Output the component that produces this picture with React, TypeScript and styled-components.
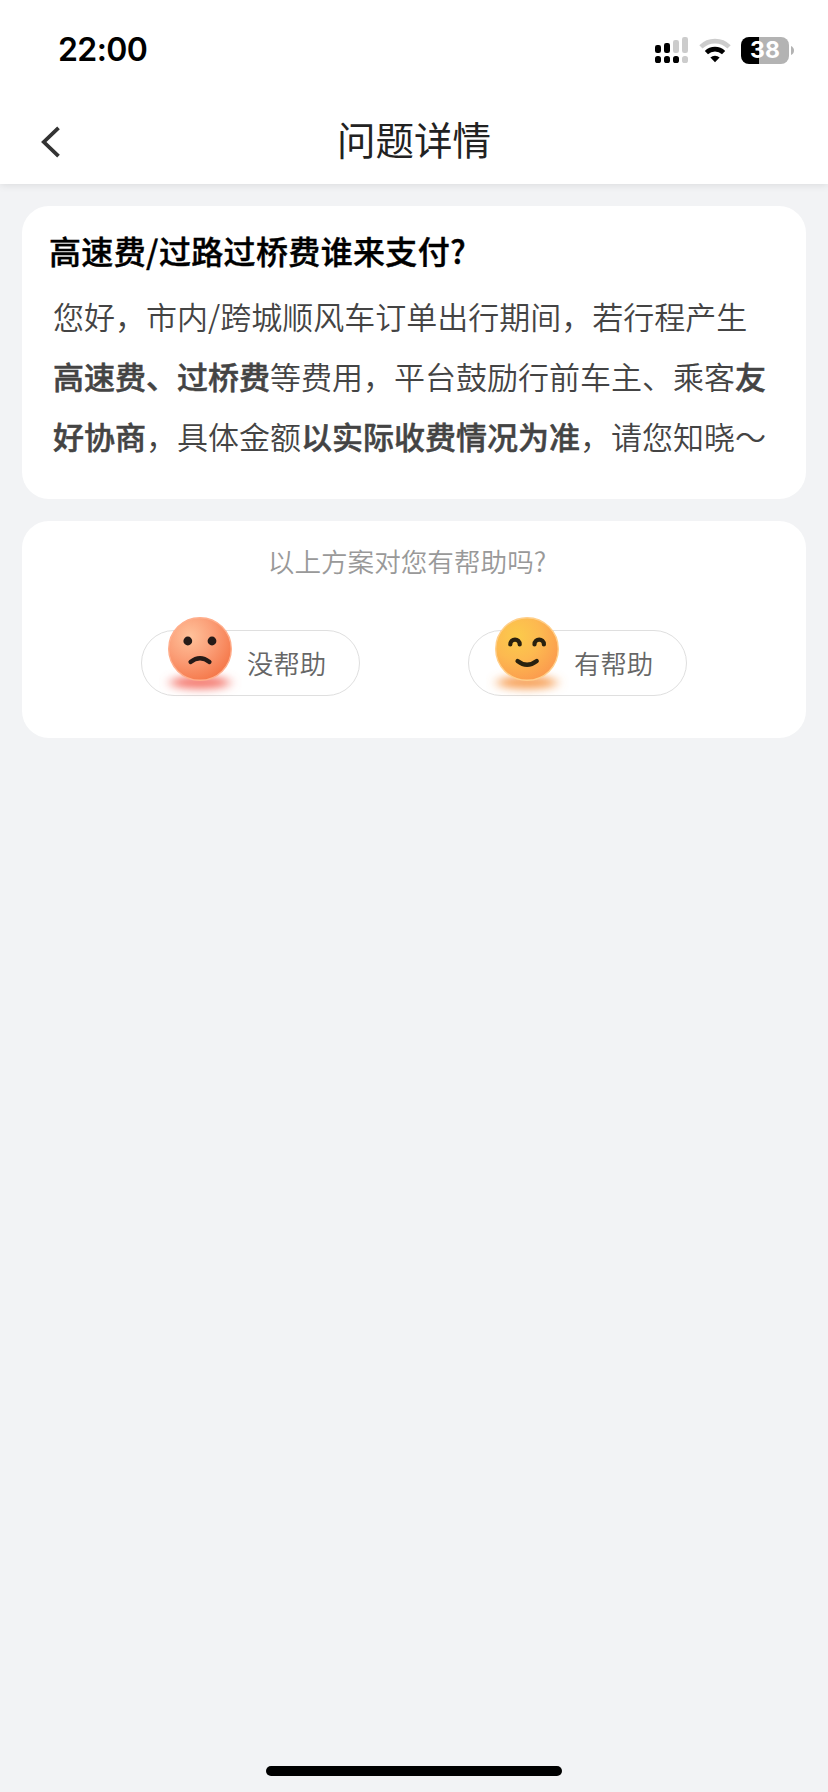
import React from "react";
import styled, { createGlobalStyle } from "styled-components";

const GlobalStyle = createGlobalStyle`
  * { box-sizing: border-box; }
  body {
    margin: 0;
    background: #f2f3f5;
    font-family: "Noto Sans CJK SC", sans-serif;
  }
`;

const Screen = styled.div`
  display: flex;
  flex-direction: column;
  width: 828px;
  height: 1792px;
  background: #f2f3f5;
`;

const Header = styled.header`
  height: 184px;
  background: #fff;
  box-shadow: 0 1px 8px rgba(0, 0, 0, 0.1);
`;

const StatusBar = styled.div`
  display: flex;
  align-items: center;
  justify-content: space-between;
  height: 100px;
  padding: 0 34px 0 58px;
`;

const Time = styled.span`
  font: 600 32px/40px Inter, sans-serif;
  letter-spacing: -0.6px;
`;

const StatusIcons = styled.div`
  display: flex;
  align-items: center;
  gap: 10px;
`;

const Battery = styled.div`
  display: flex;
  align-items: center;
  gap: 2px;
`;

const BatteryBody = styled.div<{ $level: number }>`
  width: 48px;
  height: 27px;
  border-radius: 8px;
  background: linear-gradient(to right, #000 ${(p) => p.$level}%, #b3b3b3 ${(p) => p.$level}%);
  color: #fff;
  text-align: center;
  font: 700 23px/27px Inter, sans-serif;
`;

const NavBar = styled.nav`
  display: grid;
  grid-template-columns: 100px 1fr 100px;
  align-items: center;
  height: 84px;
`;

const BackButton = styled.button`
  display: flex;
  padding: 0 0 0 40px;
  border: 0;
  background: none;
`;

const PageTitle = styled.h1`
  margin: 0;
  padding-bottom: 8px;
  color: #222;
  text-align: center;
  font-size: 38.5px;
  font-weight: 400;
  line-height: 72px;
`;

const Content = styled.main`
  display: flex;
  flex: 1;
  flex-direction: column;
  gap: 22px;
  padding: 22px 22px 0;
`;

const Card = styled.section<{ $height: number }>`
  height: ${(p) => p.$height}px;
  border-radius: 27px;
  background: #fff;
`;

const Question = styled.h2`
  margin: 0;
  padding: 20px 27px 2px;
  color: #000;
  font-size: 32px;
  font-weight: 500;
  line-height: 48px;
  letter-spacing: 0.35px;
  -webkit-text-stroke: 0.4px #000;
`;

const Answer = styled.p`
  margin: 0;
  padding: 10px 31px 0;
  color: #444;
  font-size: 31px;
  font-weight: 350;
  line-height: 60px;
  white-space: nowrap;
`;

const Strong = styled.strong`
  font-weight: 500;
  -webkit-text-stroke: 0.5px #444;
`;

const Prompt = styled.p`
  margin: 0;
  padding: 20px 14px 0 0;
  color: #999;
  text-align: center;
  font-size: 26.6px;
  font-weight: 350;
  line-height: 40px;
`;

const Choices = styled.div`
  display: flex;
  justify-content: center;
  gap: 108px;
  padding-top: 49px;
`;

const Choice = styled.button`
  position: relative;
  width: 219px;
  height: 66px;
  padding: 0 0 0 105px;
  border: 1px solid #dfdfdf;
  border-radius: 33px;
  background: #fff;
  color: #666;
  text-align: left;
  font: 350 26.4px/64px "Noto Sans CJK SC", sans-serif;
`;

const Face = styled.svg`
  position: absolute;
  left: 17px;
  top: -18px;
`;

const HomeArea = styled.footer`
  display: flex;
  justify-content: center;
  height: 26px;
`;

const HomeBar = styled.div`
  width: 296px;
  height: 10px;
  border-radius: 5px;
  background: #000;
`;

function Signal() {
  const bars = [
    { x: 0, y: 8, h: 8, on: true },
    { x: 9, y: 6, h: 10, on: true },
    { x: 18, y: 3, h: 13, on: false },
    { x: 27, y: 0, h: 16, on: false },
  ];
  return (
    <svg width="34" height="26" viewBox="0 0 34 26">
      {bars.map((b, i) => (
        <g key={b.x}>
          <rect x={b.x} y={b.y} width="6" height={b.h} rx="2.2" fill={b.on ? "#000" : "#ccc"} />
          <rect x={b.x} y="19" width="6" height="7" rx="2.6" fill={i < 3 ? "#000" : "#ccc"} />
        </g>
      ))}
    </svg>
  );
}

function Wifi() {
  return (
    <svg width="32" height="25" viewBox="0 0 32 25">
      <path d="M1.9 8.9 A20 20 0 0 1 30.1 8.9" fill="none" stroke="#ccc" strokeWidth="4.6" />
      <path d="M7.4 14.6 A12.4 12.4 0 0 1 24.6 14.6" fill="none" stroke="#000" strokeWidth="4.6" />
      <path d="M11.4 19.6 A6.6 6.6 0 0 1 20.6 19.6 L16 24.3 Z" fill="#000" />
    </svg>
  );
}

type Mood = "sad" | "happy";

const moods = {
  sad: { light: "#ffc29b", mid: "#fb9f78", deep: "#f5784a", rim: "#ffae8c", shadow: "#f47a70" },
  happy: { light: "#fbcb4b", mid: "#fdb950", deep: "#fb9b4e", rim: "#ffcf8a", shadow: "#f7a25a" },
};

function MoodFace({ mood }: { mood: Mood }) {
  const c = moods[mood];
  return (
    <Face width="84" height="90" viewBox="0 0 84 90">
      <defs>
        <radialGradient id={`${mood}-ball`} cx="0.34" cy="0.3" r="0.75">
          <stop offset="0" stopColor={c.light} />
          <stop offset="0.5" stopColor={c.mid} />
          <stop offset="1" stopColor={c.deep} />
        </radialGradient>
        <filter id={`${mood}-soft`} x="-40%" y="-150%" width="180%" height="400%">
          <feGaussianBlur stdDeviation="6 4" />
        </filter>
      </defs>
      <ellipse cx="41" cy="69.5" rx="30" ry="6.5" fill={c.shadow} filter={`url(#${mood}-soft)`} />
      <circle cx="41" cy="36" r="31.3" fill={`url(#${mood}-ball)`} stroke={c.rim} strokeWidth="1.4" />
      {mood === "sad" ? (
        <g>
          <circle cx="28.8" cy="28" r="4.4" fill="#261b18" />
          <circle cx="53" cy="28" r="4.4" fill="#261b18" />
          <path d="M31.5 49 Q41 41.5 50.5 49" fill="none" stroke="#261b18" strokeWidth="4.2" strokeLinecap="round" />
        </g>
      ) : (
        <g fill="none" stroke="#29210f" strokeWidth="4.2" strokeLinecap="round">
          <path d="M24.3 31.5 C24.3 25 33.7 25 33.7 31.5" />
          <path d="M48.5 31.5 C48.5 25 57.9 25 57.9 31.5" />
          <path d="M31.5 48 Q41 55.5 50.8 48" />
        </g>
      )}
    </Face>
  );
}

export default function App() {
  return (
    <Screen>
      <GlobalStyle />
      <Header>
        <StatusBar>
          <Time>22:00</Time>
          <StatusIcons>
            <Signal />
            <Wifi />
            <Battery>
              <BatteryBody $level={38}>38</BatteryBody>
              <svg width="3" height="9" viewBox="0 0 3 9">
                <path d="M0 0 Q3 1.5 3 4.5 Q3 7.5 0 9 Z" fill="#b3b3b3" />
              </svg>
            </Battery>
          </StatusIcons>
        </StatusBar>
        <NavBar>
          <BackButton aria-label="返回">
            <svg width="21" height="32" viewBox="0 0 21 32">
              <path d="M18.5 1.8 L3.8 16 L18.5 30.2" fill="none" stroke="#333" strokeWidth="3.8" />
            </svg>
          </BackButton>
          <PageTitle>问题详情</PageTitle>
        </NavBar>
      </Header>
      <Content>
        <Card $height={293}>
          <Question>高速费/过路过桥费谁来支付?</Question>
          <Answer>
            您好，市内/跨城顺风车订单出行期间，若行程产生
            <br />
            <Strong>高速费、过桥费</Strong>等费用，平台鼓励行前车主、乘客<Strong>友</Strong>
            <br />
            <Strong>好协商</Strong>，具体金额<Strong>以实际收费情况为准</Strong>，请您知晓～
          </Answer>
        </Card>
        <Card $height={217}>
          <Prompt>以上方案对您有帮助吗?</Prompt>
          <Choices>
            <Choice>
              <MoodFace mood="sad" />
              没帮助
            </Choice>
            <Choice>
              <MoodFace mood="happy" />
              有帮助
            </Choice>
          </Choices>
        </Card>
      </Content>
      <HomeArea>
        <HomeBar />
      </HomeArea>
    </Screen>
  );
}
